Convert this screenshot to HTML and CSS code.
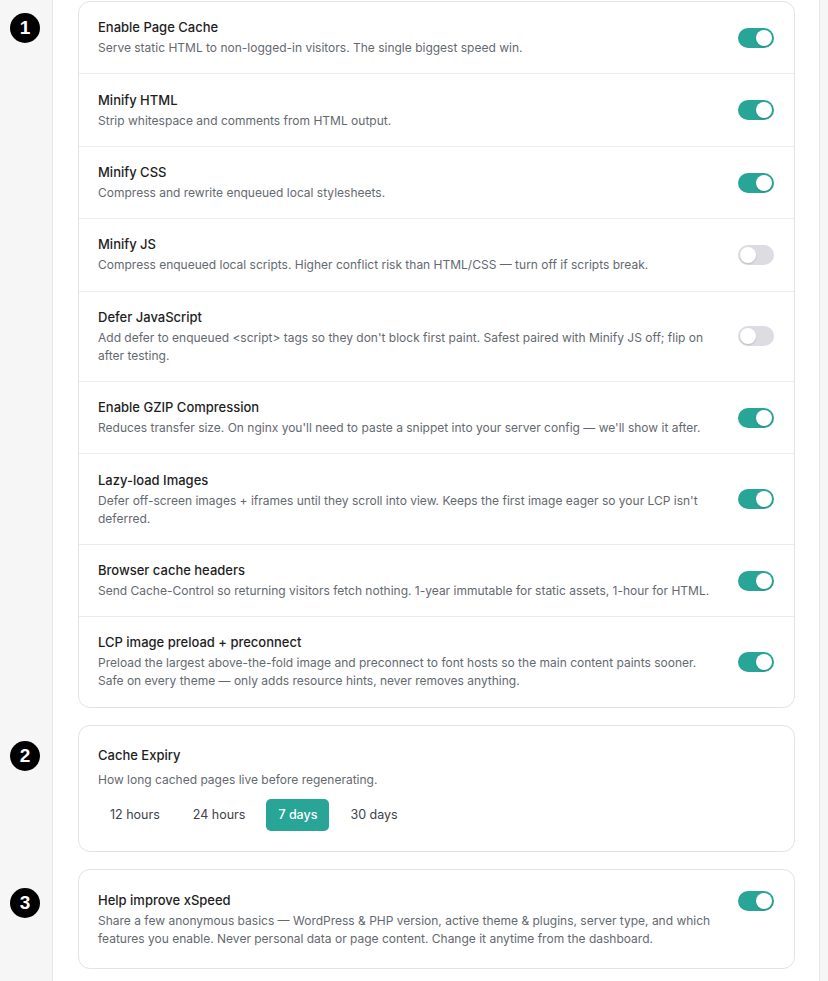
FILE: index.html
```html
<!DOCTYPE html>
<html>
<head>
<meta charset="utf-8">
<link rel="stylesheet" href="styles.css">
</head>
<body>
<div class="page">
  <section class="section first">
    <div class="gutter"><span class="badge b1">1</span></div>
    <div class="main">
      <div class="card list">
        <div class="row">
          <div class="text"><div class="title">Enable Page Cache</div><div class="desc">Serve static HTML to non-logged-in visitors. The single biggest speed win.</div></div>
          <span class="toggle on"></span>
        </div>
        <div class="row">
          <div class="text"><div class="title">Minify HTML</div><div class="desc">Strip whitespace and comments from HTML output.</div></div>
          <span class="toggle on"></span>
        </div>
        <div class="row">
          <div class="text"><div class="title">Minify CSS</div><div class="desc">Compress and rewrite enqueued local stylesheets.</div></div>
          <span class="toggle on"></span>
        </div>
        <div class="row">
          <div class="text"><div class="title">Minify JS</div><div class="desc">Compress enqueued local scripts. Higher conflict risk than HTML/CSS — turn off if scripts break.</div></div>
          <span class="toggle"></span>
        </div>
        <div class="row">
          <div class="text"><div class="title">Defer JavaScript</div><div class="desc">Add defer to enqueued &lt;script&gt; tags so they don't block first paint. Safest paired with Minify JS off; flip on after testing.</div></div>
          <span class="toggle"></span>
        </div>
        <div class="row">
          <div class="text"><div class="title">Enable GZIP Compression</div><div class="desc">Reduces transfer size. On nginx you'll need to paste a snippet into your server config — we'll show it after.</div></div>
          <span class="toggle on"></span>
        </div>
        <div class="row">
          <div class="text"><div class="title">Lazy-load Images</div><div class="desc">Defer off-screen images + iframes until they scroll into view. Keeps the first image eager so your LCP isn't deferred.</div></div>
          <span class="toggle on"></span>
        </div>
        <div class="row">
          <div class="text"><div class="title">Browser cache headers</div><div class="desc">Send Cache-Control so returning visitors fetch nothing. 1-year immutable for static assets, 1-hour for HTML.</div></div>
          <span class="toggle on"></span>
        </div>
        <div class="row">
          <div class="text"><div class="title">LCP image preload + preconnect</div><div class="desc">Preload the largest above-the-fold image and preconnect to font hosts so the main content paints sooner. Safe on every theme — only adds resource hints, never removes anything.</div></div>
          <span class="toggle on"></span>
        </div>
      </div>
    </div>
    <div class="edge"></div>
  </section>

  <section class="section">
    <div class="gutter"><span class="badge b2">2</span></div>
    <div class="main">
      <div class="card block">
        <div class="title">Cache Expiry</div>
        <div class="desc spaced">How long cached pages live before regenerating.</div>
        <div class="seg">
          <button class="opt">12 hours</button>
          <button class="opt">24 hours</button>
          <button class="opt active">7 days</button>
          <button class="opt">30 days</button>
        </div>
      </div>
    </div>
    <div class="edge"></div>
  </section>

  <section class="section">
    <div class="gutter"><span class="badge b3">3</span></div>
    <div class="main">
      <div class="card block top-row">
        <div class="text"><div class="title">Help improve xSpeed</div><div class="desc">Share a few anonymous basics — WordPress &amp; PHP version, active theme &amp; plugins, server type, and which features you enable. Never personal data or page content. Change it anytime from the dashboard.</div></div>
        <span class="toggle on"></span>
      </div>
    </div>
    <div class="edge"></div>
  </section>
  <section class="section tail">
    <div class="gutter"></div>
    <div class="main"></div>
    <div class="edge"></div>
  </section>
</div>
</body>
</html>
```

FILE: styles.css
```css
* { box-sizing: border-box; }
html, body { margin: 0; padding: 0; background: #fff; }
body {
  font-family: Inter, "Liberation Sans", sans-serif;
  color: #1e1e1e;
  -webkit-font-smoothing: antialiased;
}
.page { min-height: 981px; display: flex; flex-direction: column; }
.section {
  display: grid;
  grid-template-columns: 53px 1fr 9px;
}
.section.tail { flex: 1; }
.gutter {
  background: #f6f6f6;
  border-right: 1px solid #e6e6e6;
  display: flex;
  justify-content: center;
  align-items: flex-start;
}
.edge {
  background: #f6f6f6;
  border-left: 1px solid #e6e6e6;
}
.main {
  padding: 0 24px 17px 25px;
  background: #fff;
}
.section.first .main { padding-top: 1px; }
.badge {
  width: 30px; height: 30px;
  border-radius: 50%;
  background: #000;
  color: #fff;
  font-family: "Liberation Sans", Arial, sans-serif;
  font-weight: 700;
  font-size: 19px;
  line-height: 30px;
  text-align: center;
  margin-left: -2px;
}
.b1 { margin-top: 13px; }
.b2 { margin-top: 16px; }
.b3 { margin-top: 19px; }
.card {
  border: 1px solid #e3e3e3;
  border-radius: 12px;
  background: #fff;
}
.row {
  display: flex;
  align-items: center;
  gap: 24px;
  padding: 16.3px 20px 16.1px 19px;
  border-bottom: 1px solid #ececec;
}
.row:last-child { border-bottom: 0; }
.text { flex: 1; min-width: 0; }
.title {
  font-size: 13px;
  font-weight: 500;
  line-height: 18px;
  color: #1e1e1e;
}
.desc {
  margin-top: 3px;
  font-size: 12px;
  line-height: 18px;
  color: #646970;
}
.desc.spaced { margin-top: 7px; }
.toggle {
  flex: none;
  position: relative;
  width: 36px; height: 20px;
  border-radius: 10px;
  background: #dcdce2;
}
.toggle::after {
  content: "";
  position: absolute;
  top: 2px; left: 2px;
  width: 16px; height: 16px;
  border-radius: 50%;
  background: #fff;
  box-shadow: 0 1px 2px rgba(0,0,0,0.15);
}
.toggle.on { background: #28a597; }
.toggle.on::after { left: 18px; }
.block { padding: 20px 20px 20px 19px; }
.top-row {
  display: flex;
  align-items: flex-start;
  gap: 24px;
  padding-top: 21px;
  padding-bottom: 20px;
}
.seg {
  display: flex;
  gap: 9px;
  margin-top: 10px;
}
.opt {
  font-family: inherit;
  font-size: 12.5px;
  color: #3c434a;
  background: transparent;
  border: 0;
  border-radius: 5px;
  height: 32px;
  padding: 0 12px;
  cursor: pointer;
}
.opt.active { background: #28a597; color: #fff; font-weight: 500; }
```
